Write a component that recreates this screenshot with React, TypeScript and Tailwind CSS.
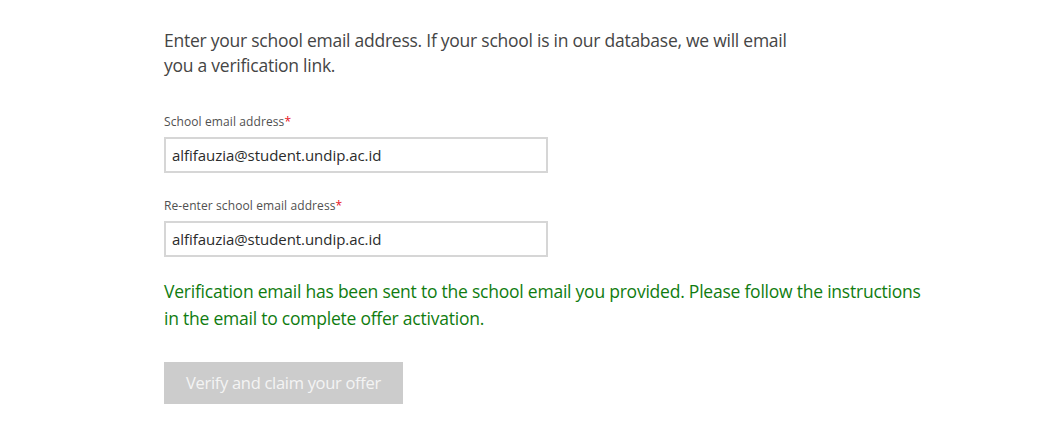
import React from 'react';

const font = { fontFamily: '"Open Sans", "Noto Sans", sans-serif' };

function Field({ label, value }: { label: string; value: string }) {
  return (
    <div className="flex flex-col">
      <label className="text-[12px] leading-[16px] text-[#505050] tracking-[0.1px]">
        {label}
        <span className="text-[#e81123]">*</span>
      </label>
      <div className="mt-[7px] w-[384px] h-[36px] border-2 border-[#d6d6d6] flex items-center px-[6px]">
        <span className="text-[15px] text-[#2b2b2b] tracking-[-0.05px]">{value}</span>
      </div>
    </div>
  );
}

export default function App() {
  return (
    <div className="w-[1047px] h-[424px] bg-white overflow-hidden" style={font}>
      <div className="pl-[164px] pt-[28px]">
        <p className="w-[632px] text-[17.5px] leading-[25px] text-[#454545] tracking-[-0.25px]">
          Enter your school email address. If your school is in our database, we will email you a verification link.
        </p>

        <div className="mt-[36px] flex flex-col gap-[25px]">
          <Field label="School email address" value="alfifauzia@student.undip.ac.id" />
          <Field label="Re-enter school email address" value="alfifauzia@student.undip.ac.id" />
        </div>

        <p className="mt-[21px] w-[765px] text-[17.5px] leading-[27px] text-[#107c10] tracking-[-0.23px]">
          Verification email has been sent to the school email you provided. Please follow the instructions in the email to complete offer activation.
        </p>

        <button
          disabled
          className="mt-[30px] w-[239px] h-[42px] bg-[#cccccc] text-[16.5px] text-[#f4f4f4] tracking-[-0.3px]"
          style={font}
        >
          Verify and claim your offer
        </button>
      </div>
    </div>
  );
}
